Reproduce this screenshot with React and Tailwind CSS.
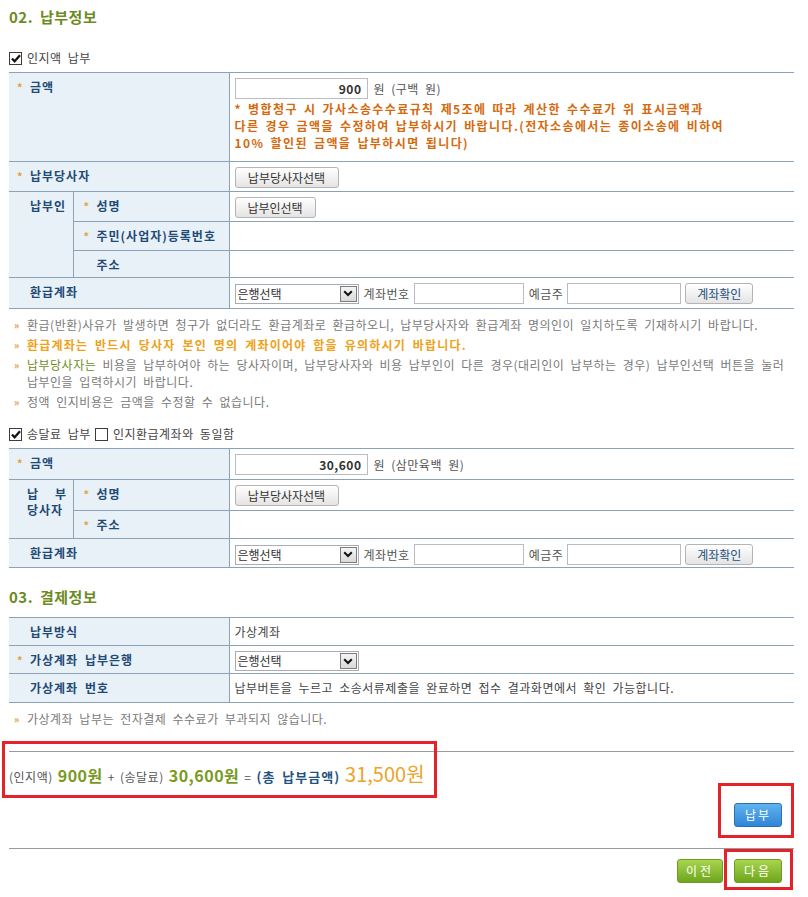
import React from "react";

const Star = ({ show }) => (
  <span className={show ? "inline-block w-[13px] text-[11px] text-[#e0a43c]" : "inline-block w-[13px] text-[11px] invisible"}>
    *
  </span>
);

const Check = ({ checked }) => (
  <span className="inline-flex items-center justify-center w-[13px] h-[13px] border border-[#3c3c3c] bg-white">
    {checked && (
      <svg width="10" height="9" viewBox="0 0 10 9">
        <path d="M1 4.5l2.6 2.8L9 1.2" stroke="#111" strokeWidth="2.2" fill="none" />
      </svg>
    )}
  </span>
);

const GrayButton = ({ children, w, blue }) => (
  <span
    className={`inline-flex items-center justify-center h-[21px] rounded-[3px] border border-[#b4b4b4] bg-gradient-to-b from-white to-[#e4e4e4] text-[12px] tracking-normal ${
      blue ? "text-[#25507c]" : "text-[#333]"
    }`}
    style={{ width: w }}
  >
    {children}
  </span>
);

const BankSelect = () => (
  <div className="flex items-center w-[124px] h-[20px] border border-[#a9adb3] bg-white">
    <span className="flex-1 pl-[2px] text-[#333] leading-[16px] tracking-normal">은행선택</span>
    <span className="flex items-center justify-center w-[17px] h-[16px] mr-[1px] border border-[#7d7d7d] bg-gradient-to-b from-[#f4f4f4] to-[#d9d9d9]">
      <svg width="10" height="7" viewBox="0 0 10 7">
        <path d="M1.2 1.2L5 5l3.8-3.8" stroke="#111" strokeWidth="2" fill="none" />
      </svg>
    </span>
  </div>
);

const TextBox = ({ w, value, bold }) => (
  <input
    readOnly
    value={value || ""}
    className={`h-[21px] border border-[#b9bcc1] bg-white text-right pr-[5px] text-[12px] text-[#333] outline-none ${
      bold ? "font-bold" : ""
    }`}
    style={{ width: w }}
  />
);

const Th = ({ children, req, sub, ...rest }) => (
  <td
    className={`bg-[#e8f0f8] align-top pt-[6px] border-r border-[#8ca2b6] font-bold text-[#1e4a74] leading-[16px] tracking-[1px] ${
      sub ? "pl-[10px]" : "pl-[8px]"
    }`}
    {...rest}
  >
    <Star show={req} />
    {children}
  </td>
);

const Td = ({ children, ...rest }) => (
  <td className="align-top pl-[5px] pt-[5px] text-[#333]" {...rest}>
    {children}
  </td>
);

const RefundRow = ({ h }) => (
  <tr className="border-b border-[#8ca2b6]" style={{ height: h }}>
    <Th colSpan={2}>환급계좌</Th>
    <Td>
      <div className="flex items-center text-[#555]">
        <BankSelect />
        <span className="ml-[5px] mr-[4px]">계좌번호</span>
        <TextBox w={110} />
        <span className="ml-[5px] mr-[4px]">예금주</span>
        <TextBox w={114} />
        <span className="ml-[4px]">
          <GrayButton w={68} blue>
            계좌확인
          </GrayButton>
        </span>
      </div>
    </Td>
  </tr>
);

const Bullet = () => <span className="shrink-0 inline-block w-[13px] text-[10px] text-[#e09a3a] font-bold">»</span>;

const Note = ({ children, className = "" }) => (
  <li className={`flex pl-[5px] ${className}`}>
    <Bullet />
    <span>{children}</span>
  </li>
);

const SectionTitle = ({ children, className }) => (
  <h2 className={`text-[15px] leading-[20px] font-bold text-[#6c8b1f] tracking-[0.5px] ${className}`}>{children}</h2>
);

export default function App() {
  return (
    <div className="relative w-[808px] min-h-[897px] bg-white pl-[9px] pr-[14px] pt-[7px] pb-[6px] text-[12px] text-[#333] tracking-[0.5px] [word-spacing:3px] font-['Noto_Sans_CJK_KR','Noto_Sans',sans-serif]">
      <SectionTitle>02. 납부정보</SectionTitle>

      <div className="flex items-center gap-[5px] mt-[24px] h-[14px] text-[#444]">
        <Check checked />
        <span>인지액 납부</span>
      </div>

      <table className="mt-[7px] w-[785px] border-collapse border-t border-[#8ca2b6] table-fixed">
        <colgroup>
          <col className="w-[64px]" />
          <col className="w-[156px]" />
          <col />
        </colgroup>
        <tbody>
          <tr className="border-b border-[#8ca2b6] h-[89px]">
            <Th req colSpan={2}>금액</Th>
            <Td>
              <div className="flex items-center">
                <TextBox w={133} value="900" bold />
                <span className="ml-[6px] text-[#555]">원 (구백 원)</span>
              </div>
              <p className="mt-[1px] font-bold leading-[17px] text-[#d46a0e] tracking-[1.4px] [word-spacing:2px] whitespace-nowrap">
                * 병합청구 시 가사소송수수료규칙 제5조에 따라 계산한 수수료가 위 표시금액과
                <br />
                다른 경우 금액을 수정하여 납부하시기 바랍니다.(전자소송에서는 종이소송에 비하여
                <br />
                10% 할인된 금액을 납부하시면 됩니다)
              </p>
            </Td>
          </tr>
          <tr className="border-b border-[#8ca2b6] h-[30px]">
            <Th req colSpan={2}>납부당사자</Th>
            <Td>
              <GrayButton w={104}>납부당사자선택</GrayButton>
            </Td>
          </tr>
          <tr className="border-b border-[#8ca2b6] h-[30px]">
            <Th rowSpan={3}>납부인</Th>
            <Th req sub>성명</Th>
            <Td>
              <GrayButton w={81}>납부인선택</GrayButton>
            </Td>
          </tr>
          <tr className="border-b border-[#8ca2b6] h-[29px]">
            <Th req sub>주민(사업자)등록번호</Th>
            <Td />
          </tr>
          <tr className="border-b border-[#8ca2b6] h-[27px]">
            <Th sub>주소</Th>
            <Td />
          </tr>
          <RefundRow h={31} />
        </tbody>
      </table>

      <ul className="mt-[7px] leading-[17px] text-[#7a7a7a]">
        <Note>
          환급(반환)사유가 발생하면 청구가 없더라도 환급계좌로 환급하오니, 납부당사자와 환급계좌 명의인이 일치하도록 기재하시기 바랍니다.
        </Note>
        <Note className="mt-[3px] font-bold text-[#eea21a] tracking-[1.2px]">
          환급계좌는 반드시 당사자 본인 명의 계좌이어야 함을 유의하시기 바랍니다.
        </Note>
        <Note className="mt-[3px]">
          <span className="text-[#6b8d1c]">납부당사자는</span> 비용을 납부하여야 하는 당사자이며, 납부당사자와 비용 납부인이 다른 경우(대리인이 납부하는 경우) 납부인선택 버튼을 눌러
          <br />
          납부인을 입력하시기 바랍니다.
        </Note>
        <Note className="mt-[3px]">정액 인지비용은 금액을 수정할 수 없습니다.</Note>
      </ul>

      <div className="flex items-center mt-[17px] h-[14px] text-[#444]">
        <Check checked />
        <span className="ml-[5px] mr-[4px]">송달료 납부</span>
        <Check />
        <span className="ml-[5px]">인지환급계좌와 동일함</span>
      </div>

      <table className="mt-[7px] w-[785px] border-collapse border-t border-[#8ca2b6] table-fixed">
        <colgroup>
          <col className="w-[64px]" />
          <col className="w-[156px]" />
          <col />
        </colgroup>
        <tbody>
          <tr className="border-b border-[#8ca2b6] h-[31px]">
            <Th req colSpan={2}>금액</Th>
            <Td>
              <div className="flex items-center">
                <TextBox w={133} value="30,600" bold />
                <span className="ml-[6px] text-[#555]">원 (삼만육백 원)</span>
              </div>
            </Td>
          </tr>
          <tr className="border-b border-[#8ca2b6] h-[31px]">
            <td rowSpan={2} className="bg-[#e8f0f8] align-top pt-[6px] pl-[18px] border-r border-[#8ca2b6] font-bold text-[#1e4a74] leading-[16px] tracking-[1px]">
              <div className="flex justify-between w-[40px]">
                <span>납</span>
                <span>부</span>
              </div>
              <div>당사자</div>
            </td>
            <Th req sub>성명</Th>
            <Td>
              <GrayButton w={104}>납부당사자선택</GrayButton>
            </Td>
          </tr>
          <tr className="border-b border-[#8ca2b6] h-[28px]">
            <Th req sub>주소</Th>
            <Td />
          </tr>
          <RefundRow h={29} />
        </tbody>
      </table>

      <SectionTitle className="mt-[19px]">03. 결제정보</SectionTitle>

      <table className="mt-[10px] w-[785px] border-collapse border-t border-[#8ca2b6] table-fixed">
        <colgroup>
          <col className="w-[220px]" />
          <col />
        </colgroup>
        <tbody>
          <tr className="border-b border-[#8ca2b6] h-[28px]">
            <Th>납부방식</Th>
            <td className="align-top pl-[5px] pt-[6px] text-[#444] leading-[16px]">가상계좌</td>
          </tr>
          <tr className="border-b border-[#8ca2b6] h-[28px]">
            <Th req>가상계좌 납부은행</Th>
            <Td>
              <BankSelect />
            </Td>
          </tr>
          <tr className="border-b border-[#8ca2b6] h-[29px]">
            <Th>가상계좌 번호</Th>
            <td className="align-top pl-[5px] pt-[6px] text-[#444] leading-[16px]">
              납부버튼을 누르고 소송서류제출을 완료하면 접수 결과화면에서 확인 가능합니다.
            </td>
          </tr>
        </tbody>
      </table>

      <ul className="mt-[7px] leading-[17px] text-[#7a7a7a]">
        <Note>가상계좌 납부는 전자결제 수수료가 부과되지 않습니다.</Note>
      </ul>

      <div className="relative mt-[24px]">
        <div className="border-t border-[#9a9a9a]" />
        <div className="flex items-center h-[43px] whitespace-nowrap [word-spacing:0px]">
          <div className="flex items-baseline">
            <span className="text-[#555]">(인지액)</span>
            <span className="ml-[5px] text-[16px] font-bold text-[#7a9a1e]">900원</span>
            <span className="mx-[5px] text-[#555]">+</span>
            <span className="text-[#555]">(송달료)</span>
            <span className="ml-[5px] text-[16px] font-bold text-[#7a9a1e]">30,600원</span>
            <span className="mx-[5px] text-[#555]">=</span>
            <span className="text-[13px] font-bold text-[#24527e] tracking-[1px] [word-spacing:3px]">(총 납부금액)</span>
            <span className="ml-[5px] text-[20px] text-[#eda42a] tracking-normal">31,500원</span>
          </div>
        </div>
        <div className="absolute left-[-7px] top-[-10px] w-[435px] h-[57px] border-[3px] border-[#e3222a]" />
      </div>

      <div className="flex justify-end mt-[8px] pr-[12px]">
        <div className="relative">
          <span className="inline-flex items-center justify-center w-[48px] h-[24px] rounded-[3px] border border-[#2c6fae] bg-gradient-to-b from-[#5fb3f0] to-[#2f86d6] text-white tracking-[2px]">
            납부
          </span>
          <div className="absolute left-[-16px] top-[-20px] w-[76px] h-[55px] border-[3px] border-[#e3222a]" />
        </div>
      </div>

      <div className="mt-[21px] border-t border-[#9a9a9a]" />

      <div className="flex justify-end gap-[11px] mt-[10px] pr-[12px]">
        <span className="inline-flex items-center justify-center w-[46px] h-[24px] rounded-[3px] border border-[#6e9c22] bg-gradient-to-b from-[#a8d64c] to-[#6fa51d] text-white tracking-[3px]">
          이전
        </span>
        <div className="relative">
          <span className="inline-flex items-center justify-center w-[48px] h-[24px] rounded-[3px] border border-[#6e9c22] bg-gradient-to-b from-[#a8d64c] to-[#6fa51d] text-white tracking-[3px]">
            다음
          </span>
          <div className="absolute left-[-10px] top-[-10px] w-[69px] h-[41px] border-[3px] border-[#e3222a]" />
        </div>
      </div>
    </div>
  );
}
